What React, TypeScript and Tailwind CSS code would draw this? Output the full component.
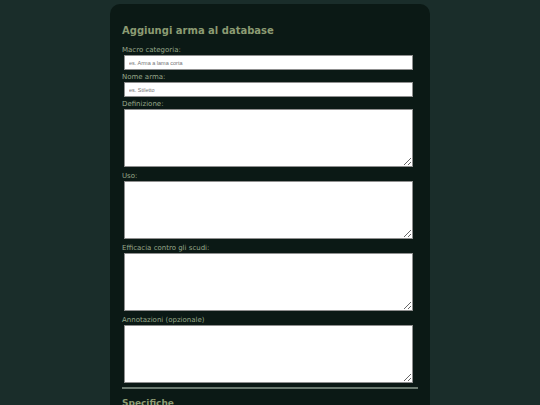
const fields = [
  { label: 'Macro categoria:', kind: 'input', placeholder: 'es. Arma a lama corta' },
  { label: 'Nome arma:', kind: 'input', placeholder: 'es. Stiletto' },
  { label: 'Definizione:', kind: 'textarea' },
  { label: 'Uso:', kind: 'textarea' },
  { label: 'Efficacia contro gli scudi:', kind: 'textarea' },
  { label: 'Annotazioni (opzionale)', kind: 'textarea' },
];

export default function App() {
  return (
    <div className="min-h-[405px] h-[405px] overflow-hidden bg-[#1a2d2a] font-['DejaVu_Sans',sans-serif]">
      <div className="ml-[110px] w-[320px] mt-[4px] h-[420px] rounded-[10px] bg-[#0b1915] px-[12px] pt-[20px]">
        <h2 className="text-[10px] leading-[14px] font-bold text-[#8b9b72]">Aggiungi arma al database</h2>
        <form className="mt-[7px]">
          {fields.map((f) => (
            <div key={f.label}>
              <label className="block text-[7px] leading-[10px] text-[#98a88a]">{f.label}</label>
              {f.kind === 'input' ? (
                <input
                  type="text"
                  placeholder={f.placeholder}
                  className="block ml-[2px] mb-[2px] w-[289px] h-[15px] bg-white border border-[#8f8f8f] px-[4px] text-[5.5px] font-['Liberation_Sans',Arial,sans-serif] placeholder:text-[#757575] outline-none"
                />
              ) : (
                <textarea className="block ml-[2px] mb-[4px] w-[289px] h-[58px] bg-white border border-[#8f8f8f] text-[6px] outline-none" />
              )}
            </div>
          ))}
        </form>
        <hr className="mt-[2px] border-0 h-[2px] bg-[#6b7a70]" />
        <h3 className="mt-[8px] text-[9px] leading-[12px] font-bold text-[#8b9b72]">Specifiche</h3>
      </div>
    </div>
  );
}
